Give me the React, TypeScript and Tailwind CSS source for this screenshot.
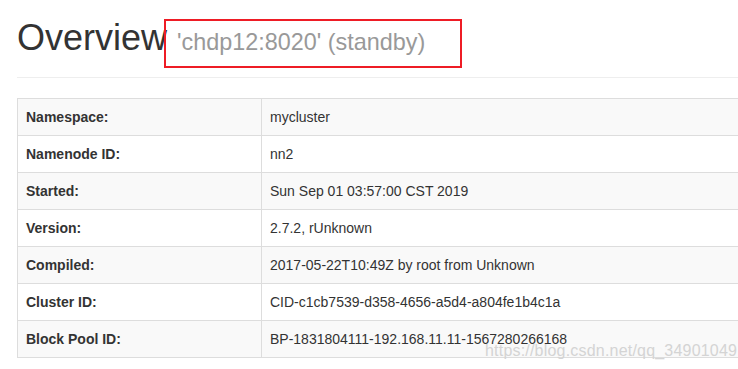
const rows: [string, string][] = [
  ["Namespace:", "mycluster"],
  ["Namenode ID:", "nn2"],
  ["Started:", "Sun Sep 01 03:57:00 CST 2019"],
  ["Version:", "2.7.2, rUnknown"],
  ["Compiled:", "2017-05-22T10:49Z by root from Unknown"],
  ["Cluster ID:", "CID-c1cb7539-d358-4656-a5d4-a804fe1b4c1a"],
  ["Block Pool ID:", "BP-1831804111-192.168.11.11-1567280266168"],
];

export default function App() {
  return (
    <div className="relative w-[738px] h-[369px] overflow-hidden bg-white font-['Liberation_Sans',Arial,sans-serif] text-[#333]">
      <div className="w-[760px] pl-[17px]">
        {/* Header */}
        <div className="pt-[18px] pb-[9px] border-b border-[#eee]">
          <h1 className="relative mb-[10px] text-[36px] leading-[1.1] font-normal whitespace-nowrap">
            Overview{" "}
            <small className="text-[23.4px] text-[#999]">'chdp12:8020' (standby)</small>
            <span className="absolute left-[147px] top-[1px] w-[298px] h-[49px] border-2 border-[#ee1c25]" />
          </h1>
        </div>

        {/* Info table */}
        <table className="mt-5 w-full border-collapse border border-[#ddd] text-[14px] leading-5">
          <tbody>
            {rows.map(([k, v], i) => (
              <tr key={k} className={i % 2 === 0 ? "bg-[#f9f9f9]" : "bg-white"}>
                <th className="w-[244px] border border-[#ddd] p-2 text-left font-bold">{k}</th>
                <td className="border border-[#ddd] p-2">{v}</td>
              </tr>
            ))}
          </tbody>
        </table>
      </div>

      {/* watermark */}
      <div className="absolute left-[485px] top-[343px] text-[16px] leading-none text-[#d4d4d4] tracking-[0.2px]">
        https://blog.csdn.net/qq_34901049
      </div>
    </div>
  );
}
